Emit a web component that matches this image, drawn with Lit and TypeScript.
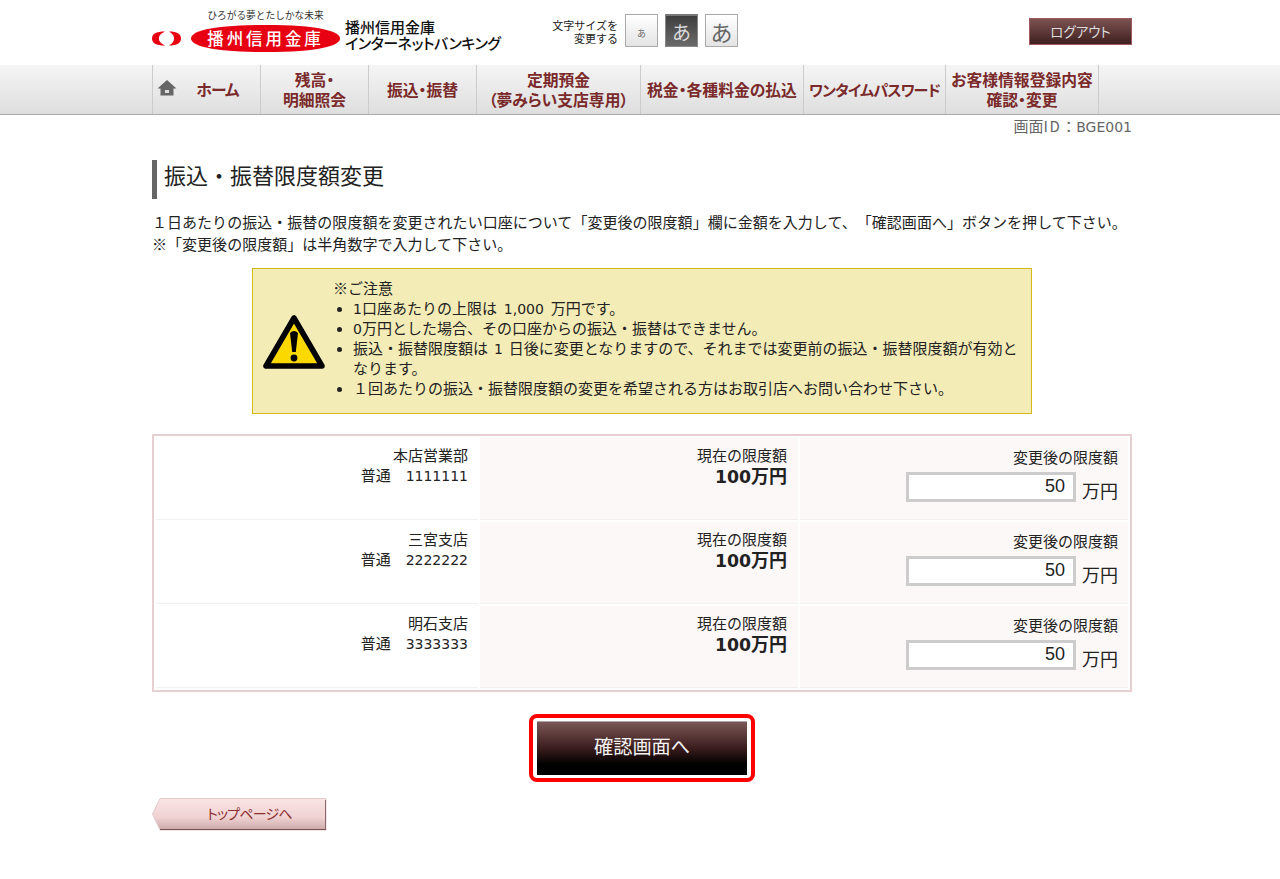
import { LitElement, html, css } from "lit";
import { customElement } from "lit/decorators.js";

const rows = [
  { branch: "本店営業部", acct: "1111111" },
  { branch: "三宮支店", acct: "2222222" },
  { branch: "明石支店", acct: "3333333" },
];

@customElement("app-root")
export class AppRoot extends LitElement {
  static styles = css`
    :host {
      display: block;
      width: 1280px;
      height: 879px;
      overflow: hidden;
      background: #fff;
      color: #222;
      font-family: "Noto Sans CJK JP", "Liberation Sans", sans-serif;
      font-size: 15px;
      line-height: 20px;
      text-spacing-trim: space-all;
    }
    .n { font-family: "DejaVu Sans", sans-serif; font-size: 14px; line-height: 1; }
    .m1 { margin: 0 3.5px; }
    .m2 { margin: 0 2.5px; }
    .wrap { width: 980px; margin-left: 152px; }
    .header { height: 65px; display: flex; align-items: flex-start; }
    .logo { width: 360px; display: flex; white-space: nowrap; }
    .mark { margin-top: 31px; width: 29px; height: 15px; display: block; flex: none; }
    .brand { margin-left: 10px; width: 149px; flex: none; }
    .tag { font-size: 9.7px; line-height: 12px; margin-top: 9px; text-align: center; color: #333; }
    .pill {
      margin-top: 4px; width: 149px; height: 27px; background: #e60012;
      clip-path: path("M0 13.5C0 6 22 0 74.5 0S149 6 149 13.5 127 27 74.5 27 0 21 0 13.5Z");
      color: #fff; font-size: 16.5px; line-height: 26px; font-weight: 500; text-align: center; letter-spacing: 2.9px;
    }
    .bank { margin-left: 5px; margin-top: 19px; font-size: 15px; line-height: 16px; color: #111; font-weight: 500; font-feature-settings: "palt"; }
    .bank span { letter-spacing: -0.45px; }
    .size { display: flex; margin-left: 40px; margin-top: 14px; width: 477px; flex: none; }
    .size-label { font-size: 11px; line-height: 13px; text-align: right; width: 66px; margin-top: 5px; color: #222; }
    .sz {
      box-sizing: border-box; width: 33px; height: 33px; margin-left: 7px; border: 1px solid #aaa;
      background: linear-gradient(#fff, #e4e4e4); color: #666; display: flex; align-items: center; justify-content: center;
      font-size: 19px; line-height: 1;
    }
    .sz.s { font-size: 9px; padding-top: 6px; }
    .sz.on { background: linear-gradient(#3f3f3f, #6a6a6a); color: #ddd; border: 1px solid #888; border-top: 2px solid #777; font-size: 19px; }
    .sz.l { font-size: 22px; }
    .logout {
      box-sizing: border-box; width: 103px; height: 27px; margin-top: 18px; border: 1px solid #a35a5f; flex: none;
      background: linear-gradient(#7c5252, #3f2020); color: #ddd; font-size: 13.5px; line-height: 24px; text-align: center;
      font-feature-settings: "palt";
    }
    .nav { height: 50px; box-sizing: border-box; background: linear-gradient(#f5f5f5, #dedede); border-bottom: 1px solid #aaa; }
    .nav-in { display: flex; height: 49px; width: 947px; margin-left: 152px; border-left: 1px solid #ccc; box-sizing: border-box; }
    .ni {
      box-sizing: border-box; height: 49px; padding-top: 1px; border-right: 1px solid #ccc; display: flex; align-items: center; justify-content: center;
      text-align: center; color: #7a2a2a; font-size: 15.8px; line-height: 20px; font-weight: 700; white-space: nowrap;
      font-feature-settings: "palt";
    }
    .ni.w { font-size: 15px; letter-spacing: -0.8px; }
    .home { position: relative; padding-left: 22px; letter-spacing: -0.8px; }
    .home svg { position: absolute; left: 4px; top: 14px; }
    .sid { text-align: right; color: #666; line-height: 20px; height: 45px; padding-top: 1px; box-sizing: border-box; }
    .sid .id { letter-spacing: 1.5px; }
    h1 {
      margin: 0; height: 39px; box-sizing: border-box; border-left: 5px solid #666; padding-left: 7px;
      font-size: 22px; line-height: 29px; font-weight: 400; color: #222;
    }
    .intro { margin-top: 12px; line-height: 22px; white-space: nowrap; letter-spacing: 0.03px; }
    .note {
      box-sizing: border-box; width: 780px; height: 146px; margin: 13px 0 0 100px; border: 1px solid #d3b81a; background: #f4ecb6;
      display: flex; padding: 9px 12px 0 10px;
    }
    .warn { width: 62px; height: 56px; margin-top: 36px; flex: none; }
    .nt { margin-left: 8px; line-height: 20px; }
    .note ul { margin: 0; padding: 0 0 0 20px; }
    .note li::marker { font-size: 12px; }
    table {
      width: 980px; margin-top: 20px; border: 2px solid #e8d0d2; border-spacing: 2px; box-sizing: border-box;
      border-collapse: separate; table-layout: fixed;
    }
    td { box-sizing: border-box; height: 82px; padding: 0; vertical-align: top; text-align: right; border-bottom: 1px solid #f3f0f0; }
    .c1 { width: 322px; padding: 7px 10px 0 0; }
    .c2 { width: 318px; background: #fcf8f7; padding: 7px 11px 0 0; }
    .c3 { width: 328px; background: #fcf8f7; padding: 9px 10px 0 0; }
    .amt { font-weight: 700; font-size: 18px; }
    .amt .n { font-size: 17.3px; font-weight: 700; }
    .in { display: flex; justify-content: flex-end; align-items: flex-end; margin-top: 5px; }
    .box {
      box-sizing: border-box; width: 170px; height: 30px; border: 3px solid #ccc; background: #fff; text-align: right;
      padding-right: 8px; font-family: "Liberation Sans", sans-serif; font-size: 18px; line-height: 23px; color: #222;
    }
    .unit { font-size: 18px; margin-left: 6px; line-height: 20px; position: relative; top: -2px; }
    .go { display: flex; justify-content: center; margin-top: 22px; }
    .btn {
      box-sizing: border-box; width: 226px; height: 68px; border: 4px solid #f00; border-radius: 8px; background: #fff; padding: 3px 4px;
    }
    .btn div {
      height: 100%; border-top: 1px solid #aaa; box-sizing: border-box;
      background: linear-gradient(#7c5757 0%, #3a1c1c 50%, #000 80%); color: #f4f4f4; font-size: 19.2px; line-height: 48px; text-align: center;
    }
    .top { margin-top: 16px; width: 175px; height: 33px; display: block; position: relative; }
    .top svg { display: block; }
    .top span {
      position: absolute; left: 55px; top: 5px; color: #8a3030; font-size: 14px;
      font-feature-settings: "palt"; letter-spacing: -0.8px; white-space: nowrap;
    }
  `;

  render() {
    return html`
      <div class="wrap header">
        <div class="logo">
          <svg class="mark" viewBox="0 0 29 15">
            <path d="M0 7.5C0 3 4 .5 13 .5 8 3 7 5 7 7.5S8 12 13 14.5C4 14.5 0 12 0 7.5Z" fill="#e60012"/>
            <path d="M29 7.5C29 3 25 .5 17 .5 21 3 22 5 22 7.5S21 12 17 14.5C25 14.5 29 12 29 7.5Z" fill="#e60012"/>
          </svg>
          <div class="brand">
            <div class="tag">ひろがる夢とたしかな未来</div>
            <div class="pill">播州信用金庫</div>
          </div>
          <div class="bank">播州信用金庫<br /><span>インターネットバンキング</span></div>
        </div>
        <div class="size">
          <div class="size-label">文字サイズを<br />変更する</div>
          <div class="sz s">あ</div>
          <div class="sz on">あ</div>
          <div class="sz l">あ</div>
        </div>
        <div class="logout">ログアウト</div>
      </div>
      <div class="nav">
        <div class="nav-in">
          <div class="ni home" style="width:108px">
            <svg width="20" height="18" viewBox="0 0 20 18"><path d="M10 1L0.5 9.5H3.5V16.5H16.5V9.5H19.5L10 1Z" fill="#666"/><rect x="8" y="11" width="4" height="3" fill="#ddd"/></svg>
            ホーム
          </div>
          <div class="ni" style="width:108px">残高・<br />明細照会</div>
          <div class="ni" style="width:108px">振込・振替</div>
          <div class="ni" style="width:164px">定期預金<br />（夢みらい支店専用）</div>
          <div class="ni" style="width:163px">税金・各種料金の払込</div>
          <div class="ni w" style="width:142px">ワンタイムパスワード</div>
          <div class="ni" style="width:153px">お客様情報登録内容<br />確認・変更</div>
        </div>
      </div>
      <div class="wrap">
        <div class="sid">画面<span class="id">ID</span>：<span class="n">BGE001</span></div>
        <h1>振込・振替限度額変更</h1>
        <div class="intro">１日あたりの振込・振替の限度額を変更されたい口座について「変更後の限度額」欄に金額を入力して、「確認画面へ」ボタンを押して下さい。<br />※「変更後の限度額」は半角数字で入力して下さい。</div>
        <div class="note">
          <svg class="warn" viewBox="0 0 62 56">
            <path d="M31 4L3 52H59Z" fill="#fad800" stroke="#000" stroke-width="5.5" stroke-linejoin="round"/>
            <path d="M27 19Q31 15 35 19L32.8 38H29.2Z" fill="#000"/><circle cx="31" cy="44" r="3.4" fill="#000"/>
          </svg>
          <div class="nt">
            ※ご注意
            <ul>
              <li><span class="n">1</span>口座あたりの上限は <span class="n m1">1,000</span> 万円です。</li>
              <li><span class="n">0</span>万円とした場合、その口座からの振込・振替はできません。</li>
              <li>振込・振替限度額は <span class="n m2">1</span> 日後に変更となりますので、それまでは変更前の振込・振替限度額が有効となります。</li>
              <li>１回あたりの振込・振替限度額の変更を希望される方はお取引店へお問い合わせ下さい。</li>
            </ul>
          </div>
        </div>
        <table>
          ${rows.map(
            (r) => html`<tr>
              <td class="c1">${r.branch}<br />普通　<span class="n">${r.acct}</span></td>
              <td class="c2">現在の限度額<br /><span class="amt"><span class="n">100</span>万円</span></td>
              <td class="c3">変更後の限度額
                <div class="in"><div class="box">50</div><span class="unit">万円</span></div>
              </td>
            </tr>`
          )}
        </table>
        <div class="go"><div class="btn"><div>確認画面へ</div></div></div>
        <div class="top">
          <svg width="175" height="33" viewBox="0 0 175 33">
            <defs><linearGradient id="g" x1="0" y1="0" x2="0" y2="1"><stop offset="0" stop-color="#f9e4e4"/><stop offset="0.6" stop-color="#f0d2d2"/><stop offset="1" stop-color="#c9a8a8"/></linearGradient></defs>
            <path d="M8 0.5H174V32H8L0.5 16Z" fill="url(#g)" stroke="#e3caca"/>
            <path d="M8 31.5H174" stroke="#7a5050"/><path d="M173.5 2V31" stroke="#8a6a6a"/>
          </svg>
          <span>トップページへ</span>
        </div>
      </div>
    `;
  }
}
